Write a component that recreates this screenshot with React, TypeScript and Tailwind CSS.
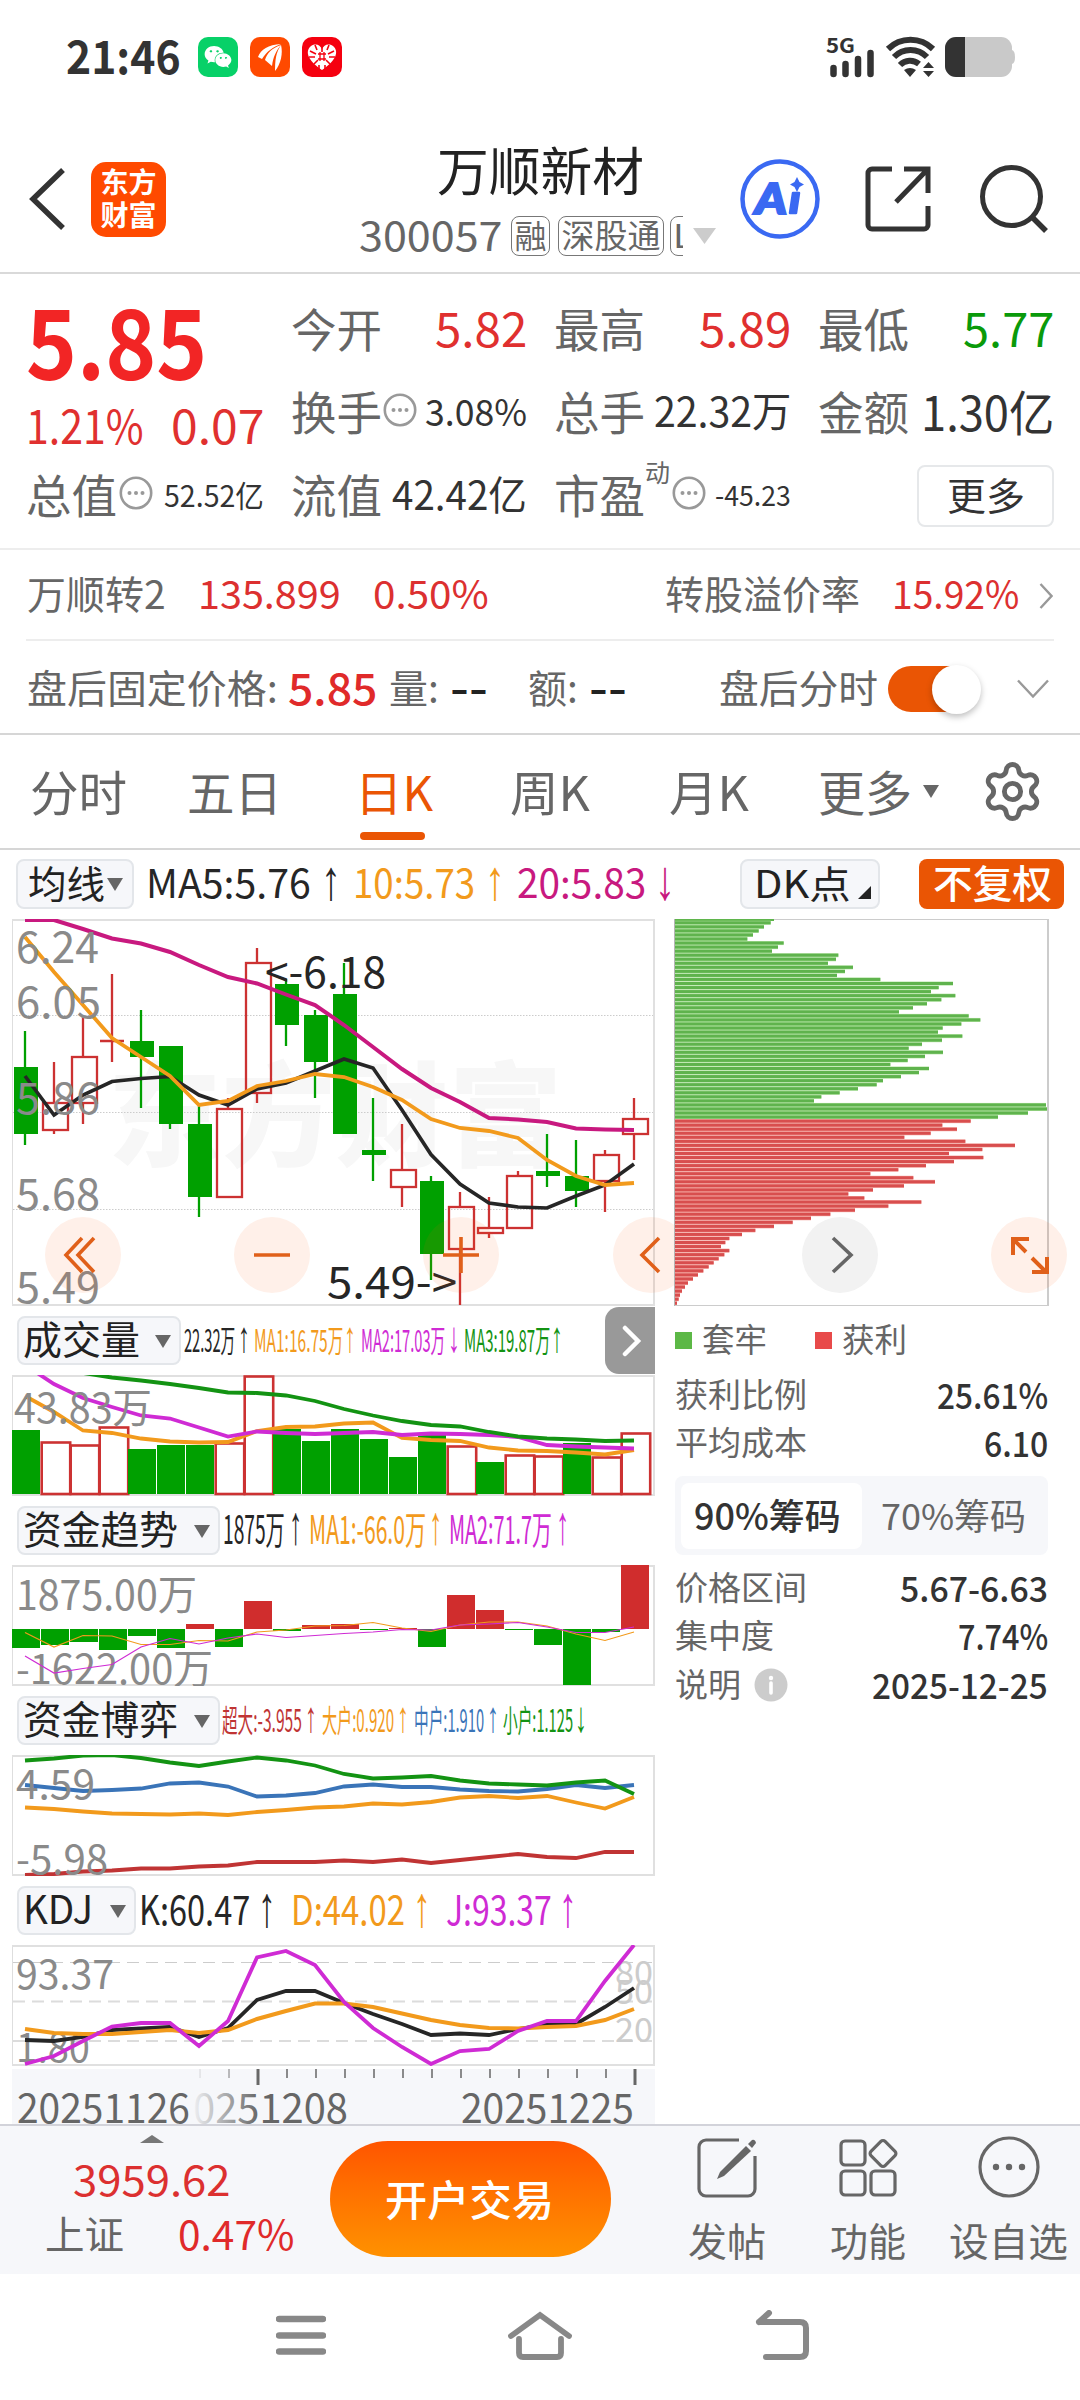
import { useLayoutEffect, useRef } from "react";
import type { ReactNode } from "react";
import clsx from "clsx";
import { Settings } from "lucide-react";
import { FaWeixin } from "react-icons/fa";

// Squeezes one line of text into the width of its box
const Fit = ({ className, children }: { className: string; children: ReactNode }) => {
  const outer = useRef<HTMLSpanElement>(null);
  const inner = useRef<HTMLSpanElement>(null);

  useLayoutEffect(() => {
    if (!outer.current || !inner.current) return;
    const scale = outer.current.clientWidth / inner.current.offsetWidth;
    inner.current.style.transform = `translateY(-0.065em) scaleX(${scale})`;
  }, [children]);

  return (
    <span ref={outer} className={clsx("block shrink-0 whitespace-nowrap leading-none", className)}>
      <span ref={inner} className="inline-block origin-left leading-none">
        {children}
      </span>
    </span>
  );
};

const RED = "#cc3232";
const GREEN = "#00a000";
const ORANGE = "#f29a1c";
const PINK = "#c8197f";
const MAGENTA = "#cf2bd4";
const BLACK = "#262626";
const BLUE = "#3a74b8";

const STEP = 29;
const X0 = 25;

// wick top, wick bottom, body top, body bottom, rising
const candles: [number, number, number, number, boolean][] = [
  [1031, 1145, 1067, 1134, false],
  [1062, 1134, 1103, 1130, true],
  [1016, 1124, 1057, 1103, true],
  [974, 1062, 1041, 1041, true],
  [1010, 1108, 1041, 1057, false],
  [1046, 1129, 1046, 1124, false],
  [1105, 1217, 1124, 1197, false],
  [1098, 1197, 1109, 1197, true],
  [948, 1103, 963, 1093, true],
  [979, 1046, 984, 1025, false],
  [1010, 1098, 1015, 1062, false],
  [963, 1134, 994, 1134, false],
  [1098, 1181, 1150, 1155, false],
  [1124, 1207, 1170, 1187, true],
  [1176, 1280, 1181, 1254, false],
  [1192, 1305, 1207, 1249, true],
  [1197, 1238, 1228, 1233, true],
  [1171, 1228, 1176, 1228, true],
  [1134, 1187, 1171, 1176, false],
  [1140, 1207, 1176, 1191, false],
  [1150, 1212, 1155, 1181, true],
  [1098, 1160, 1119, 1134, true],
];

const ma5 = [1076, 1115, 1095, 1081.5, 1078.5, 1076.5, 1095, 1105, 1089, 1083, 1071, 1059, 1068, 1110, 1154.5, 1184, 1203, 1207, 1208, 1196, 1185, 1164];
const ma10 = [937, 972, 1005, 1038, 1057, 1076, 1105, 1101, 1086, 1081, 1074, 1077, 1087, 1100, 1119, 1128, 1131, 1138, 1160, 1176, 1185, 1183];
const ma20 = [920, 920, 929, 938.5, 943.5, 952, 965, 977, 983.5, 994.5, 1005, 1025, 1047, 1069, 1088, 1102, 1118, 1119.5, 1122, 1128.5, 1129.5, 1130];

const volumes: [number, boolean][] = [
  [1430, false], [1442, true], [1445, true], [1427, true], [1449, false], [1445, false],
  [1445, false], [1443, true], [1376, true], [1429, false], [1441, false], [1429, false],
  [1439, false], [1457, false], [1435, false], [1446, true], [1462, false], [1455, true],
  [1456, true], [1443, false], [1457, true], [1433, true],
];
const volMa1 = [1396, 1412, 1430.5, 1433, 1438.5, 1441.5, 1442.5, 1442, 1431, 1427, 1426.5, 1423.5, 1422.5, 1438, 1440, 1441, 1447.5, 1450.5, 1451, 1452.5, 1454.5, 1450];
const volMa2 = [1365, 1384, 1398, 1407, 1415.5, 1418.5, 1427.5, 1436.5, 1431.5, 1433, 1434, 1433, 1432, 1435, 1433.5, 1434, 1435, 1437, 1445, 1446.5, 1447.5, 1448.5];
const volMa3 = [1366, 1369, 1373, 1377.5, 1380.5, 1384, 1388, 1392.5, 1393, 1395.5, 1401, 1409, 1415.5, 1421, 1425, 1426.5, 1432, 1436.5, 1438.5, 1439.5, 1441, 1440.5];

// end of each bar measured from the zero line at 1629
const flows = [1648, 1645, 1642, 1650, 1636, 1648, 1624, 1647, 1601, 1631, 1625, 1624, 1630, 1628, 1647, 1595, 1610, 1630, 1645, 1685, 1632, 1565];
const flowMa1 = [1632.5, 1647, 1635.5, 1636, 1644.5, 1644.5, 1640.5, 1641, 1632, 1630, 1626, 1625.5, 1622.5, 1628, 1631.5, 1625, 1622, 1622, 1626, 1634, 1640.5, 1632];
const flowMa2 = [1656, 1673, 1668.5, 1664.5, 1647, 1638.5, 1644, 1638, 1634, 1637.5, 1635.5, 1633.5, 1632, 1629.5, 1630, 1625, 1624, 1622.5, 1627, 1632.5, 1632.5, 1627];

const gameSmall = [1760.5, 1758.5, 1755.5, 1755, 1758, 1762.5, 1766, 1761.5, 1757.5, 1760.5, 1765.5, 1774, 1778.5, 1777.5, 1776, 1780.5, 1783.5, 1784.5, 1785.5, 1782.5, 1780.5, 1794];
const gameMid = [1785, 1788, 1791, 1790, 1788.5, 1783.5, 1782.5, 1786.5, 1796.5, 1795.5, 1793, 1786.5, 1784.5, 1787, 1787, 1789.5, 1791, 1791.5, 1789, 1785, 1788, 1785];
const gameBig = [1807.5, 1809, 1811.5, 1813.5, 1814, 1814.5, 1813.5, 1815, 1812, 1810, 1807.5, 1806.5, 1803.5, 1804.5, 1802, 1797.5, 1796, 1798, 1796, 1802.5, 1808.5, 1797];
const gameHuge = [1875, 1874, 1871.5, 1870.5, 1868.5, 1868.5, 1866.5, 1865.5, 1862, 1862, 1862, 1860.5, 1862, 1859.5, 1863, 1860, 1857, 1854, 1857, 1858, 1852, 1852];

const kdjK = [2040, 2041, 2037, 2030, 2028.5, 2027, 2037, 2028, 2000, 1991, 1991, 2003, 2014, 2024, 2035, 2033.5, 2035, 2029, 2024.5, 2024, 2007, 1988];
const kdjD = [2029, 2033, 2034, 2034, 2032, 2030, 2033, 2030, 2019, 2011, 2003.5, 2003.5, 2007, 2013.5, 2020, 2025, 2028, 2028.5, 2027, 2026, 2020, 2009];
const kdjJ = [2064, 2056, 2041, 2026.5, 2023, 2023, 2046, 2021, 1957.5, 1951, 1965, 2002, 2028, 2047, 2064, 2051, 2049, 2031, 2021, 2021, 1981, 1945];

const chipsTrapped = [
  332, 312, 296, 279, 262, 371, 354, 336, 535, 528, 504, 579, 555, 531, 661, 879, 836, 813, 886, 844,
  801, 759, 717, 926, 961, 904, 848, 834, 907, 846, 786, 746, 849, 795, 743, 691, 807, 777, 723, 669,
  650, 594, 539, 484, 462, 1158, 1165, 1104, 1014,
];
const chipsProfit = [
  932, 847, 891, 812, 733, 916, 1065, 967, 867, 970, 882, 798, 715, 631, 760, 825, 732, 639, 565, 613,
  784, 685, 585, 511, 453, 398, 342, 286, 246, 208, 196, 183, 208, 193, 176, 161, 146, 130, 114, 99,
  84, 75, 66, 60, 56, 51,
];

const Line = ({ data, color, width = 3.8 }: { data: number[]; color: string; width?: number }) => (
  <polyline
    points={data.map((y, i) => `${X0 + STEP * i},${y}`).join(" ")}
    fill="none"
    stroke={color}
    strokeWidth={width}
  />
);

type LabelProps = { x: number; y: number; w: number; size?: number; color?: string; children: string };

const Label = ({ x, y, w, size = 41, color = "#8a8a8a", children }: LabelProps) => (
  <text x={x} y={y} fontSize={size} fill={color} textLength={w} lengthAdjust="spacingAndGlyphs">
    {children}
  </text>
);

const Frame = ({ top, height }: { top: number; height: number }) => (
  <>
    <path d={`M12.5 ${top} V${top + height}`} stroke="#dedede" />
    <path
      d={`M12 ${top + 1} H654 V${top + height - 1} H12`}
      fill="none"
      stroke="#e0e0e0"
      strokeWidth="2"
    />
  </>
);

const SubChart = ({ top, children }: { top: number; children: ReactNode }) => (
  <svg width="644" height="121" viewBox={`12 ${top} 644 121`} className="block">
    <Frame top={top} height={121} />
    {children}
  </svg>
);

const Arrow = ({ down, className }: { down?: boolean; className: string }) => (
  <Fit className={clsx("font-['Liberation_Sans'] text-[1.4em]", className)}>{down ? "↓" : "↑"}</Fit>
);

const Caret = ({ className }: { className: string }) => (
  <svg viewBox="0 0 16 13" className={clsx("h-[13px] w-4 shrink-0 fill-[#666]", className)}>
    <path d="M0 0h16L8 13z" />
  </svg>
);

const Dots = ({ className }: { className?: string }) => (
  <svg viewBox="0 0 34 34" className={clsx("h-[34px] w-[34px] shrink-0", className)}>
    <circle cx="17" cy="17" r="15.2" fill="none" stroke="#999" strokeWidth="2.6" />
    <circle cx="10.5" cy="17" r="2" fill="#999" />
    <circle cx="17" cy="17" r="2" fill="#999" />
    <circle cx="23.5" cy="17" r="2" fill="#999" />
  </svg>
);

const StatusBar = () => (
  <div className="flex h-[114px] items-center pl-[66px]">
    <Fit className="w-[115px] text-[46px] font-bold text-[#333]">21:46</Fit>
    <div className="ml-[17px] flex h-10 w-10 items-center justify-center rounded-[10px] bg-[#07d168]">
      <FaWeixin className="h-7 w-7 fill-white" />
    </div>
    <div className="ml-3 flex h-10 w-10 items-center justify-center rounded-[10px] bg-[#ff4a00]">
      <svg viewBox="0 0 40 40" className="h-10 w-10 fill-white">
        <path d="M8 20C11 12 18 8 31 7C23 10 17 14 12 22z" />
        <path d="M15 23C17 16 22 11 31 8C26 14 23 20 22 29z" />
        <path d="M25 34C31 27 33 16 31 8C26 15 25 23 25 34z" />
      </svg>
    </div>
    <div className="ml-3 flex h-10 w-10 items-center justify-center rounded-[10px] bg-[#f5000f]">
      <svg viewBox="0 0 40 40" className="h-10 w-10">
        <path d="M20 33C5 23 3 14 9 9C14 6 18 8 20 12C22 8 26 6 31 9C37 14 35 23 20 33z" fill="#fff" />
        <path
          d="M8 14l6 3M32 14l-6 3M7 20l6 0M33 20l-6 0M12 27l4-4M28 27l-4-4M20 10v5M17 28v4M23 28v4M13 8l2 5M27 8l-2 5"
          stroke="#f5000f"
          strokeWidth="1.600"
        />
        <path d="M16 17h8M16 22h8M18 15v9M22 15v9" stroke="#f5000f" strokeWidth="1.300" />
      </svg>
    </div>
    <svg viewBox="822 35 196 44" className="ml-[481px] h-11 w-[196px] shrink-0">
      <text x="825" y="53" fontSize="20" fontWeight="700" fill="#333" textLength="29" lengthAdjust="spacingAndGlyphs">
        5G
      </text>
      <path d="M832.500 68v6M844.500 64v10M857 59v15M869.500 53v21" stroke="#333" strokeWidth="6.500" strokeLinecap="round" />
      <path d="M887 49a32 32 0 0 1 45 0M893 57a23 23 0 0 1 33 0M899 65a14 14 0 0 1 19 -1" fill="none" stroke="#333" strokeWidth="6" />
      <path d="M903 70q6-4 12 0l-6 7z M922 68l5.500-6 5.500 6z M922 71h11l-5.500 6z" fill="#333" />
      <rect x="944" y="37" width="67" height="40" rx="11" fill="#c9c9c9" />
      <path d="M1011 50q3 1 3 7t-3 7z" fill="#c9c9c9" />
      <path d="M964 37h-9a11 11 0 0 0-11 11v18a11 11 0 0 0 11 11h9z" fill="#333" />
    </svg>
  </div>
);

const Header = () => (
  <div className="flex h-[160px] items-center border-b-2 border-[#d9d9d9] pl-7 pt-[12px]">
    <svg viewBox="0 0 38 62" className="h-[62px] w-[38px] shrink-0">
      <path d="M35 2L5 31l30 29" fill="none" stroke="#333" strokeWidth="5.500" />
    </svg>
    <div className="ml-[25px] flex h-[75px] w-[75px] shrink-0 flex-col items-center justify-center gap-[5px] rounded-[15px] bg-[#ff4a00] font-bold text-white">
      <Fit className="w-[56px] text-[28px]">东方</Fit>
      <Fit className="w-[56px] text-[28px]">财富</Fit>
    </div>
    <div className="ml-[193px] mt-1 flex w-[361px] flex-col gap-[18px]">
      <Fit className="ml-[78px] w-[207px] text-[52px] text-[#222]">万顺新材</Fit>
      <div className="flex h-10 items-center text-[#666]">
        <Fit className="w-[144px] text-[41px]">300057</Fit>
        <div className="ml-2 flex h-10 w-[39px] items-center justify-center rounded-lg border-[1.5px] border-[#777]">
          <Fit className="w-[32px] text-[32px]">融</Fit>
        </div>
        <div className="ml-[8px] flex h-10 w-[106px] items-center justify-center rounded-lg border-[1.5px] border-[#777]">
          <Fit className="w-[99px] text-[33px]">深股通</Fit>
        </div>
        <div className="ml-1.5 w-[13px] overflow-hidden">
          <div className="flex h-10 w-10 items-center rounded-lg border-[1.5px] border-[#777] pl-[2px]">
            <Fit className="w-[20px] text-[33px]">L</Fit>
          </div>
        </div>
        <svg viewBox="0 0 23 16" className="ml-[10px] h-4 w-[23px] fill-[#ccc]">
          <path d="M0 0h23L11.500 16z" />
        </svg>
      </div>
    </div>
    <svg viewBox="0 0 80 80" className="ml-5 h-20 w-20 shrink-0">
      <circle cx="40" cy="40" r="37.500" fill="none" stroke="#3a69f2" strokeWidth="4.500" />
      <text x="15" y="55" fontSize="42" fontWeight="900" fontStyle="italic" fontFamily="Lato" fill="#3a69f2" stroke="#3a69f2" strokeWidth="2" textLength="32" lengthAdjust="spacingAndGlyphs">
        A
      </text>
      <path d="M53 34h6l-3 20h-6z" fill="#3a69f2" stroke="#3a69f2" strokeWidth="2.500" strokeLinejoin="round" />
      <path d="M57 18l2.500 5 4.500 2.500-4.500 2.500-2.500 5-2.500-5-4.500-2.500 4.500-2.500z" fill="#3a69f2" />
    </svg>
    <svg viewBox="0 0 66 66" className="ml-[45px] h-[66px] w-[66px] shrink-0">
      <path
        d="M27 3H7a4 4 0 0 0-4 4v52a4 4 0 0 0 4 4h52a4 4 0 0 0 4-4V40M39 3h24v24M62 4L31 36"
        fill="none"
        stroke="#333"
        strokeWidth="5"
      />
    </svg>
    <svg viewBox="0 0 68 68" className="ml-[49px] h-[68px] w-[68px] shrink-0">
      <circle cx="31.500" cy="31.500" r="29" fill="none" stroke="#333" strokeWidth="5" />
      <path d="M52 52l14 14" stroke="#333" strokeWidth="5.500" />
    </svg>
  </div>
);

const Quote = () => (
  <div className="grid h-[276px] grid-cols-4 grid-rows-[83px_83px_83px] gap-x-7 border-b-2 border-[#ededed] pl-7 pr-[26px] pt-[14px] text-[#666]">
    <div className="row-span-2 text-[#e0302f]">
      <div className="flex h-[111px] items-center">
        <Fit className="-ml-0.5 w-[181px] text-[97px] font-bold text-[#f22525]">5.85</Fit>
      </div>
      <div className="flex h-[54px] items-center justify-between">
        <Fit className="-ml-0.5 w-[118px] text-[47px]">1.21%</Fit>
        <Fit className="w-[93px] text-[47px]">0.07</Fit>
      </div>
    </div>
    <div className="flex items-center justify-between">
      <Fit className="-ml-px w-[91px] text-[46px]">今开</Fit>
      <Fit className="w-[92px] text-[47px] text-[#e0302f]">5.82</Fit>
    </div>
    <div className="flex items-center justify-between">
      <Fit className="-ml-px w-[91px] text-[46px]">最高</Fit>
      <Fit className="w-[92px] text-[47px] text-[#e0302f]">5.89</Fit>
    </div>
    <div className="flex items-center justify-between">
      <Fit className="-ml-px w-[91px] text-[46px]">最低</Fit>
      <Fit className="w-[91px] text-[47px] text-[#0a9a0a]">5.77</Fit>
    </div>
    <div className="flex items-center">
      <Fit className="-ml-px w-[91px] text-[46px]">换手</Fit>
      <Dots className="-mt-1.5 ml-px" />
      <Fit className="ml-auto w-[102px] text-[37px] text-[#333]">3.08%</Fit>
    </div>
    <div className="flex items-center justify-between">
      <Fit className="-ml-px w-[91px] text-[46px]">总手</Fit>
      <Fit className="w-[137px] text-[41px] text-[#333]">22.32万</Fit>
    </div>
    <div className="flex items-center justify-between">
      <Fit className="-ml-px w-[91px] text-[46px]">金额</Fit>
      <Fit className="w-[133px] text-[48px] text-[#333]">1.30亿</Fit>
    </div>
    <div className="flex items-center">
      <Fit className="-ml-0.5 w-[91px] text-[46px]">总值</Fit>
      <Dots className="-mt-1.5 ml-0.5" />
      <Fit className="ml-auto w-[100px] text-[30px] text-[#333]">52.52亿</Fit>
    </div>
    <div className="flex items-center justify-between">
      <Fit className="-ml-px w-[91px] text-[46px]">流值</Fit>
      <Fit className="w-[135px] text-[40px] text-[#333]">42.42亿</Fit>
    </div>
    <div className="flex items-center">
      <Fit className="-ml-px w-[91px] text-[46px]">市盈</Fit>
      <Fit className="-mt-11 w-[25px] text-[25px]">动</Fit>
      <Dots className="-mt-1.5 ml-0.5" />
      <Fit className="ml-auto w-[76px] text-[28px] text-[#333]">-45.23</Fit>
    </div>
    <div className="flex items-center justify-end">
      <button className="flex h-[62px] w-[137px] items-center justify-center rounded-lg border-2 border-[#e6e8ea]">
        <Fit className="w-[78px] text-[38px] text-[#333]">更多</Fit>
      </button>
    </div>
  </div>
);

const BondRow = () => (
  <div className="mx-[26px] flex h-[91px] items-center border-b-2 border-[#ededed] pt-0.5 text-[39px]">
    <Fit className="ml-px w-[139px] text-[#666]">万顺转2</Fit>
    <Fit className="ml-8 w-[143px] text-[#dc3030]">135.899</Fit>
    <Fit className="ml-8 w-[116px] text-[#dc3030]">0.50%</Fit>
    <Fit className="ml-auto w-[195px] text-[#666]">转股溢价率</Fit>
    <Fit className="ml-[32px] w-[127px] text-[#dc3030]">15.92%</Fit>
    <svg viewBox="0 0 14 26" className="ml-5 mr-px h-[26px] w-[14px]">
      <path d="M1.500 1l11 12-11 12" fill="none" stroke="#999" strokeWidth="2.400" />
    </svg>
  </div>
);

const AfterHours = () => (
  <div className="flex h-[94px] items-center border-b-2 border-[#d6d6d6] pl-[27px] pt-1 text-[39px] text-[#666]">
    <Fit className="w-[251px]">盘后固定价格:</Fit>
    <Fit className="ml-[10px] w-[89px] text-[43px] font-medium text-[#e02a2a]">5.85</Fit>
    <Fit className="ml-[12px] w-[50px]">量:</Fit>
    <Fit className="ml-[11px] w-[38px] font-bold text-[#222]">--</Fit>
    <Fit className="ml-[40px] w-[50px]">额:</Fit>
    <Fit className="ml-[11px] w-[38px] font-bold text-[#222]">--</Fit>
    <Fit className="ml-[92px] w-[159px]">盘后分时</Fit>
    <div className="ml-[10px] flex h-[46px] w-[91px] items-center justify-end rounded-full bg-[#ea5504]">
      <div className="-mr-0.5 h-[49px] w-[49px] shrink-0 rounded-full bg-white shadow-[0_3px_6px_rgba(0,0,0,0.25)]"></div>
    </div>
    <svg viewBox="0 0 32 20" className="ml-[38px] h-5 w-8">
      <path d="M1 1.500l15 16 15-16" fill="none" stroke="#999" strokeWidth="2.400" />
    </svg>
  </div>
);

const Tabs = () => (
  <div className="flex h-[115px] items-center border-b-2 border-[#d6d6d6] pl-[30px] text-[48px] text-[#666]">
    <Fit className="mt-0.5 w-[97px]">分时</Fit>
    <Fit className="ml-[60px] mt-0.5 w-[95px]">五日</Fit>
    <div className="relative ml-[73px] flex h-full items-center text-[#ea5504]">
      <Fit className="mt-0.5 w-[78px]">日K</Fit>
      <div className="absolute bottom-[8px] left-[5px] h-2 w-[65px] rounded-full bg-[#ea5504]"></div>
    </div>
    <Fit className="ml-[77px] mt-0.5 w-[80px]">周K</Fit>
    <Fit className="ml-[79px] mt-0.5 w-[80px]">月K</Fit>
    <Fit className="ml-[69px] mt-0.5 w-[94px]">更多</Fit>
    <Caret className="ml-[11px]" />
    <Settings className="ml-[41px] h-[65px] w-[65px]" strokeWidth={1.8} />
  </div>
);

const Averages = () => (
  <div className="flex h-[69px] items-center pb-px pl-4 text-[40px]">
    <button className="flex h-[50px] w-[118px] items-center rounded-lg border-2 border-[#e3e6ea] bg-[#f6f7fa] pl-2.5">
      <Fit className="w-[77px] text-[38px] text-[#222]">均线</Fit>
      <Caret className="ml-0.5" />
    </button>
    <Fit className="ml-[12px] w-[165px] text-[#262626]">MA5:5.76</Fit>
    <Arrow className="ml-[10px] w-[20px] text-[#262626]" />
    <Fit className="ml-[12px] w-[122px] text-[#f29a1c]">10:5.73</Fit>
    <Arrow className="ml-[10px] w-[20px] text-[#f29a1c]" />
    <Fit className="ml-[12px] w-[129px] text-[#c8197f]">20:5.83</Fit>
    <Arrow down className="ml-[9px] w-[20px] text-[#c8197f]" />
    <button className="ml-[65px] flex h-[50px] w-[140px] items-center rounded-lg border-2 border-[#e3e6ea] bg-[#f6f7fa] pl-2">
      <Fit className="w-[97px] text-[38px] text-[#222]">DK点</Fit>
      <svg viewBox="0 0 13 13" className="ml-[11px] mt-[17px] h-[13px] w-[13px]">
        <path d="M13 0v13H0z" fill="#222" />
      </svg>
    </button>
    <button className="ml-[39px] flex h-[50px] w-[145px] items-center justify-center rounded-lg bg-[#ea5504]">
      <Fit className="w-[119px] text-[39px] font-medium text-white">不复权</Fit>
    </button>
  </div>
);

const RoundButton = ({ gray, className, children }: { gray?: boolean; className?: string; children: ReactNode }) => (
  <svg viewBox="-38 -38 76 76" className={clsx("absolute top-[298px] h-[76px] w-[76px]", className)}>
    <circle r="38" fill={gray ? "#f2f2f2" : "rgba(255,90,10,0.09)"} />
    <g fill="none" stroke={gray ? "#666" : "#e0601a"} strokeWidth="3.600">
      {children}
    </g>
  </svg>
);

const KLine = () => (
  <div className="relative h-[387px] w-[644px]">
    <svg width="644" height="387" viewBox="12 919 644 387" className="block">
      <text x="108" y="1157" fontSize="113" fontWeight="900" fill="#f7f7f7" textLength="454">
        东方财富
      </text>
      <path d="M13 1015.500H654M13 1112.500H654M13 1209.500H654" stroke="#ccc" strokeDasharray="1.500 1.500" />
      <Frame top={919} height={387} />
      {candles.map(([high, low, top, bottom, up], i) => {
        const x = X0 + STEP * i;
        const color = up ? RED : GREEN;
        return (
          <g key={i} stroke={color} strokeWidth="2.300">
            {top === bottom ? (
              <path d={`M${x} ${high}V${low}M${x - 12} ${top}h24`} />
            ) : up ? (
              <>
                <path d={`M${x} ${high}V${top}M${x} ${bottom}V${low}`} />
                <rect x={x - 11} y={top} width="25" height={bottom - top} fill="none" />
              </>
            ) : (
              <>
                <path d={`M${x} ${high}V${low}`} />
                <rect x={x - 11} y={top} width="24" height={bottom - top} fill={color} stroke="none" />
              </>
            )}
          </g>
        );
      })}
      <Line data={ma5} color={BLACK} width={3.6} />
      <Line data={ma10} color={ORANGE} />
      <Line data={ma20} color={PINK} width={4} />
      <Label x={16} y={963} w={83} size={43}>6.24</Label>
      <Label x={16} y={1018} w={85} size={43}>6.05</Label>
      <Label x={16} y={1114} w={84} size={43}>5.86</Label>
      <Label x={16} y={1210} w={84} size={43}>5.68</Label>
      <Label x={16} y={1303} w={84} size={43}>5.49</Label>
      <Label x={265} y={988} w={121} size={43} color="#262626">{"<-6.18"}</Label>
      <Label x={327} y={1298} w={130} size={43} color="#262626">{"5.49->"}</Label>
    </svg>
    {/* Zoom and pan controls */}
    <div className="absolute left-0 top-0 h-full w-[662px] overflow-hidden">
      <RoundButton className="left-[33px]">
        <path d="M-1 -17L-17 0L-1 17M11 -17L-5 0L11 17" />
      </RoundButton>
      <RoundButton className="left-[222px]">
        <path d="M-18 0H18" />
      </RoundButton>
      <RoundButton className="left-[411px]">
        <path d="M-18 0H18M0 -18V18" />
      </RoundButton>
      <RoundButton className="left-[601px]">
        <path d="M8 -17L-9 0L8 17" />
      </RoundButton>
    </div>
  </div>
);

const Chips = () => {
  const bars = [...chipsTrapped, ...chipsProfit];
  return (
    <div className="relative h-[387px] w-[375px]">
      <svg width="375" height="387" viewBox="0 0 375 387" className="block">
        <rect x="0" y="0" width="100" height="2" fill="#5fb54c" />
        {bars.map((end, i) => {
          const trapped = i < chipsTrapped.length;
          const y = 1.8 + i * 4.047;
          return (
            <g key={i}>
              <rect x="0" y={y} width={end / 3 - 14} height="4.050" fill={trapped ? "#b4e4a4" : "#f5aaa4"} />
              <rect x="0" y={y + 0.5} width={end / 3 - 14} height="3" fill={trapped ? "#5fb34d" : "#d84e4e"} />
            </g>
          );
        })}
        <path d="M100 0.500H374M0 386.500H374" stroke="#ccc" />
        <path d="M0.500 0V387" stroke="#b5b5b5" />
        <path d="M374 0V387" stroke="#ccc" strokeWidth="2" />
      </svg>
      <RoundButton gray className="left-[128px]">
        <path d="M-7 -17L11 0L-7 17" />
      </RoundButton>
      <RoundButton className="left-[317px]">
        <path d="M-16 0V-16H0M-16 -16L-3 -3M3 3L17 17M18 2V17H3" strokeWidth="4" />
      </RoundButton>
    </div>
  );
};

const IndicatorButton = ({ name, box, text }: { name: string; box: string; text: string }) => (
  <button
    className={clsx(
      "flex h-[49px] shrink-0 items-center justify-between rounded-lg border-2 border-[#e3e6ea] bg-[#f6f7fa] pl-1 pr-2 text-[#222]",
      box
    )}
  >
    <Fit className={text}>{name}</Fit>
    <Caret className="mt-0.5" />
  </button>
);

const VolumeHeader = () => (
  <div className="relative flex h-[69px] items-center pl-[5px] text-[31px]">
    <IndicatorButton name="成交量" box="w-[164px]" text="w-[117px] text-[39px]" />
    <Fit className="ml-[3px] w-[51px] text-[#262626]">22.32万</Fit>
    <Arrow className="ml-[3px] w-[12px] text-[#262626]" />
    <Fit className="ml-[4px] w-[89px] text-[#f29a1c]">MA1:16.75万</Fit>
    <Arrow className="ml-[1px] w-[12px] text-[#f29a1c]" />
    <Fit className="ml-[5px] w-[84px] text-[#cf2bd4]">MA2:17.03万</Fit>
    <Arrow down className="ml-[3px] w-[12px] text-[#cf2bd4]" />
    <Fit className="ml-[4px] w-[86px] text-[#139313]">MA3:19.87万</Fit>
    <Arrow className="ml-[1px] w-[12px] text-[#139313]" />
    <div className="absolute right-px top-px flex h-[67px] w-[50px] items-center justify-center rounded-l-[14px] bg-[#999]">
      <svg viewBox="0 0 20 32" className="ml-1 h-8 w-5">
        <path d="M3 3l13 13L3 29" fill="none" stroke="#fff" strokeWidth="4.500" strokeLinecap="round" />
      </svg>
    </div>
  </div>
);

const Volume = () => (
  <SubChart top={1375}>
    {volumes.map(([top, up], i) =>
      up ? (
        <rect key={i} x={12.7 + STEP * i} y={top + 0.5} width="28.500" height={1493.5 - top} fill="#fff" stroke={RED} strokeWidth="2.600" />
      ) : (
        <rect key={i} x={12 + STEP * i} y={top} width="28" height={1494 - top} fill={GREEN} />
      )
    )}
    <Line data={volMa1} color={ORANGE} />
    <Line data={volMa2} color={MAGENTA} />
    <Line data={volMa3} color="#139313" />
    <Label x={14} y={1423} w={138}>43.83万</Label>
  </SubChart>
);

const FlowHeader = () => (
  <div className="flex h-[69px] items-center pl-[5px] text-[39px]">
    <IndicatorButton name="资金趋势" box="w-[203px]" text="w-[155px] text-[39px]" />
    <Fit className="ml-[3px] w-[62px] text-[#262626]">1875万</Fit>
    <Arrow className="ml-[4px] w-[13px] text-[#262626]" />
    <Fit className="ml-[7px] w-[117px] text-[#f29a1c]">MA1:-66.0万</Fit>
    <Arrow className="ml-[3px] w-[13px] text-[#f29a1c]" />
    <Fit className="ml-[7px] w-[103px] text-[#cf2bd4]">MA2:71.7万</Fit>
    <Arrow className="ml-[4px] w-[13px] text-[#cf2bd4]" />
  </div>
);

const Flow = () => (
  <SubChart top={1565}>
    {flows.map((end, i) => (
      <rect
        key={i}
        x={12 + STEP * i}
        y={Math.min(end, 1629)}
        width="28"
        height={Math.abs(end - 1629)}
        fill={end < 1629 ? "#d02d2d" : GREEN}
      />
    ))}
    <Label x={16} y={1610} w={181}>1875.00万</Label>
    <Label x={16} y={1684} w={197}>-1622.00万</Label>
    <Line data={flowMa1} color={ORANGE} width={1.2} />
    <Line data={flowMa2} color={MAGENTA} width={1.2} />
  </SubChart>
);

const GameHeader = () => (
  <div className="flex h-[69px] items-center pl-[5px] text-[31px]">
    <IndicatorButton name="资金博弈" box="w-[203px]" text="w-[155px] text-[39px]" />
    <Fit className="ml-[2px] w-[80px] text-[#c03434]">超大:-3.955</Fit>
    <Arrow className="ml-[3px] w-[12px] text-[#c03434]" />
    <Fit className="ml-[5px] w-[72px] text-[#f29a1c]">大户:0.920</Fit>
    <Arrow className="ml-[3px] w-[12px] text-[#f29a1c]" />
    <Fit className="ml-[5px] w-[70px] text-[#3a74b8]">中户:1.910</Fit>
    <Arrow className="ml-[3px] w-[12px] text-[#3a74b8]" />
    <Fit className="ml-[4px] w-[70px] text-[#139313]">小户:1.125</Fit>
    <Arrow down className="ml-[2px] w-[12px] text-[#139313]" />
  </div>
);

const Game = () => (
  <SubChart top={1755}>
    <Line data={gameHuge} color="#c03434" />
    <Line data={gameBig} color={ORANGE} />
    <Line data={gameMid} color={BLUE} />
    <Line data={gameSmall} color="#139313" />
    <Label x={16} y={1799} w={79}>4.59</Label>
    <Label x={16} y={1874} w={92}>-5.98</Label>
  </SubChart>
);

const KdjHeader = () => (
  <div className="flex h-[69px] items-center pl-[5px] text-[41px]">
    <IndicatorButton name="KDJ" box="w-[119px]" text="w-[70px] text-[39px]" />
    <Fit className="ml-[3px] w-[111px] text-[#262626]">K:60.47</Fit>
    <Arrow className="ml-[8px] w-[18px] text-[#262626]" />
    <Fit className="ml-[15px] w-[114px] text-[#f29a1c]">D:44.02</Fit>
    <Arrow className="ml-[8px] w-[18px] text-[#f29a1c]" />
    <Fit className="ml-[15px] w-[106px] text-[#cf2bd4]">J:93.37</Fit>
    <Arrow className="ml-[7px] w-[18px] text-[#cf2bd4]" />
  </div>
);

const Kdj = () => (
  <SubChart top={1945}>
    <path d="M13 1962.500H654" stroke="#ccc" strokeWidth="1.200" strokeDasharray="12 7" />
    <path d="M13 2001.500H654M13 2041H654" stroke="#dcdcdc" strokeWidth="2" strokeDasharray="12 7" />
    <Label x={615} y={1985} w={38} size={34} color="#ccc">80</Label>
    <Label x={615} y={2004} w={38} size={34} color="#ccc">50</Label>
    <Label x={615} y={2042} w={38} size={34} color="#ccc">20</Label>
    <Label x={16} y={1989} w={98}>93.37</Label>
    <Label x={16} y={2062} w={74}>1.80</Label>
    <Line data={kdjK} color={BLACK} />
    <Line data={kdjD} color={ORANGE} width={4} />
    <Line data={kdjJ} color={MAGENTA} />
  </SubChart>
);

const TimeAxis = () => (
  <svg width="644" height="55" viewBox="12 2069 644 55" className="mt-[3px] block">
    <defs>
      <linearGradient id="fade">
        <stop offset="0" stopColor="#f6f7fa" />
        <stop offset="0.050" stopColor="#f6f7fa" stopOpacity="0.900" />
        <stop offset="1" stopColor="#f6f7fa" stopOpacity="0" />
      </linearGradient>
    </defs>
    <rect x="12" y="2069" width="643" height="55" fill="#f6f7fa" />
    {Array.from({ length: 16 }, (_, n) => n + 6).map((i) => {
      const big = i === 8 || i === 21;
      return (
        <path
          key={i}
          d={`M${X0 + 1 + STEP * i} 2069v${big ? 16 : 9}`}
          stroke="#666"
          strokeWidth={big ? 3 : 1.5}
        />
      );
    })}
    <Label x={171} y={2123} w={177} size={40} color="#666">20251208</Label>
    <rect x="193" y="2069" width="66" height="55" fill="url(#fade)" />
    <rect x="12" y="2088" width="181" height="36" fill="#f6f7fa" />
    <Label x={17} y={2123} w={173} size={40} color="#666">20251126</Label>
    <Label x={461} y={2123} w={173} size={40} color="#666">20251225</Label>
  </svg>
);

const ChipStats = () => (
  <div className="w-[374px] pl-px text-[33px] text-[#666]">
    <div className="flex h-[69px] items-center">
      <div className="h-[17px] w-[17px] bg-[#5cb846]"></div>
      <Fit className="ml-[10px] w-[65px]">套牢</Fit>
      <div className="ml-[48px] h-[17px] w-[17px] bg-[#e84a4a]"></div>
      <Fit className="ml-[10px] w-[65px]">获利</Fit>
    </div>
    <div className="flex h-[40px] items-center justify-between">
      <Fit className="w-[132px]">获利比例</Fit>
      <Fit className="w-[111px] text-[35px] font-medium text-[#333]">25.61%</Fit>
    </div>
    <div className="mt-[8px] flex h-[40px] items-center justify-between">
      <Fit className="w-[132px]">平均成本</Fit>
      <Fit className="w-[64px] text-[35px] font-medium text-[#333]">6.10</Fit>
    </div>
    <div className="mt-[13px] flex h-[79px] items-center rounded-lg bg-[#f6f7fa] pl-1.5 text-[36px]">
      <div className="flex h-[66px] w-[181px] items-center rounded-lg bg-white pl-[13px]">
        <Fit className="w-[147px] font-medium text-[#333]">90%筹码</Fit>
      </div>
      <Fit className="ml-[19px] w-[145px]">70%筹码</Fit>
    </div>
    <div className="mt-[13px] flex h-[40px] items-center justify-between">
      <Fit className="w-[132px]">价格区间</Fit>
      <Fit className="w-[148px] text-[35px] font-medium text-[#333]">5.67-6.63</Fit>
    </div>
    <div className="mt-[8px] flex h-[40px] items-center justify-between">
      <Fit className="w-[99px]">集中度</Fit>
      <Fit className="w-[90px] text-[35px] font-medium text-[#333]">7.74%</Fit>
    </div>
    <div className="mt-[9px] flex h-[40px] items-center">
      <Fit className="w-[66px]">说明</Fit>
      <svg viewBox="0 0 34 34" className="ml-[13px] h-[34px] w-[34px]">
        <circle cx="17" cy="17" r="16.500" fill="#ccc" />
        <circle cx="17" cy="10" r="2.200" fill="#fff" />
        <path d="M17 15v10" stroke="#fff" strokeWidth="3.600" strokeLinecap="round" />
      </svg>
      <Fit className="ml-auto w-[176px] text-[35px] font-medium text-[#333]">2025-12-25</Fit>
    </div>
  </div>
);

const BottomBar = () => (
  <div className="flex h-[150px] border-t-2 border-[#d2d3da] bg-[#f6f7fa] text-[39px] text-[#666]">
    <div className="ml-[45px] w-[250px]">
      <svg viewBox="0 0 24 8" className="ml-[95px] mt-[9px] block h-2 w-6">
        <path d="M0 8L12 0l12 8z" fill="#777" />
      </svg>
      <Fit className="ml-[28px] mt-[17px] w-[158px] text-[42px] text-[#dc3030]">3959.62</Fit>
      <div className="mt-[12px] flex h-[42px] items-center">
        <Fit className="w-[79px]">上证</Fit>
        <Fit className="ml-[54px] w-[116px] text-[41px] text-[#e02a2a]">0.47%</Fit>
      </div>
    </div>
    <button className="ml-[35px] mt-[15px] flex h-[116px] w-[281px] items-center justify-center rounded-full bg-linear-to-b from-[#ff5400] to-[#ff9100] pt-1">
      <Fit className="-ml-0.5 w-[169px] text-[42px] font-medium text-white">开户交易</Fit>
    </button>
    <div className="ml-[77px] flex w-[78px] flex-col items-center pt-3">
      <svg viewBox="0 0 60 60" className="block h-[60px] w-[60px]">
        <path d="M42 2H9a7 7 0 0 0-7 7v42a7 7 0 0 0 7 7h42a7 7 0 0 0 7-7V18" fill="none" stroke="#666" strokeWidth="3.200" />
        <path d="M49 8l5 5L27 38l-7 3 3-7z" fill="#666" />
        <path d="M51 6l4-4q3-1 4 3l-4 5z" fill="#666" />
      </svg>
      <Fit className="mt-[25px] w-[78px]">发帖</Fit>
    </div>
    <div className="ml-[64px] flex w-[76px] flex-col items-center pt-3">
      <svg viewBox="0 0 60 60" className="block h-[60px] w-[60px]" fill="none" stroke="#666" strokeWidth="3.200">
        <rect x="3" y="3" width="24" height="24" rx="4" />
        <rect x="3" y="33" width="24" height="24" rx="4" />
        <rect x="33" y="33" width="24" height="24" rx="4" />
        <rect x="35" y="5.500" width="20" height="20" rx="3" transform="rotate(45 45 15.500)" />
      </svg>
      <Fit className="mt-[25px] w-[76px]">功能</Fit>
    </div>
    <div className="ml-[43px] flex w-[119px] flex-col items-center pt-[10px]">
      <svg viewBox="0 0 62 62" className="block h-[62px] w-[62px]">
        <circle cx="31" cy="31" r="29" fill="none" stroke="#666" strokeWidth="3.200" />
        <circle cx="18" cy="31" r="3.200" fill="#666" />
        <circle cx="31" cy="31" r="3.200" fill="#666" />
        <circle cx="44" cy="31" r="3.200" fill="#666" />
      </svg>
      <Fit className="mt-[25px] w-[119px]">设自选</Fit>
    </div>
  </div>
);

const NavBar = () => (
  <div className="flex h-[126px] items-center justify-between bg-white pb-[4px] pl-[276px] pr-[270px]">
    <svg viewBox="0 0 50 40" className="h-10 w-[50px]">
      <path d="M3 4h44M3 20.500h44M3 36.500h44" stroke="#888" strokeWidth="6.400" strokeLinecap="round" />
    </svg>
    <svg viewBox="0 0 64 50" className="h-[50px] w-16">
      <path d="M3 26L32 5l29 21M11 29v14q0 4 4 4h34q4 0 4-4V29" fill="none" stroke="#888" strokeWidth="5.800" strokeLinecap="round" />
    </svg>
    <svg viewBox="0 0 56 50" className="h-[50px] w-14">
      <path d="M5 12h41q6 0 6 6v23q0 6-6 6H12M5 12l10-9" fill="none" stroke="#888" strokeWidth="6" strokeLinecap="round" />
    </svg>
  </div>
);

const App = () => {
  return (
    <div className="h-[2400px] w-[1080px] overflow-hidden bg-white font-['Noto_Sans_CJK_SC',sans-serif]">
      <StatusBar />
      <Header />
      <Quote />
      <BondRow />
      <AfterHours />
      <Tabs />
      <Averages />
      {/* Charts on the left, chip distribution on the right */}
      <div className="flex h-[1205px] gap-[18px] pl-3">
        <div>
          <KLine />
          <VolumeHeader />
          <Volume />
          <FlowHeader />
          <Flow />
          <GameHeader />
          <Game />
          <KdjHeader />
          <Kdj />
          <TimeAxis />
        </div>
        <div>
          <Chips />
          <ChipStats />
        </div>
      </div>
      <BottomBar />
      <NavBar />
    </div>
  );
};

export default App;
